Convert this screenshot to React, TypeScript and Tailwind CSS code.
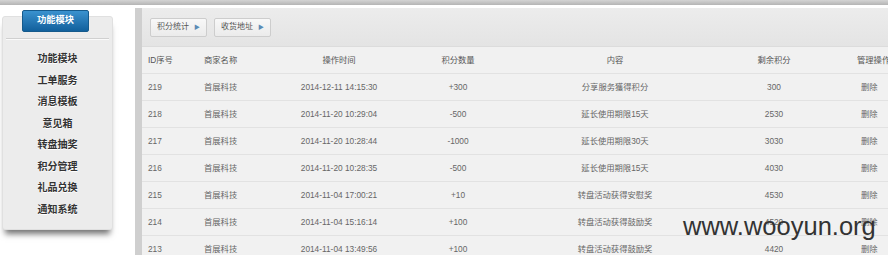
import React from "react";

const rows = [
  ["219", "首展科技", "2014-12-11 14:15:30", "+300", "分享服务獲得积分", "300"],
  ["218", "首展科技", "2014-11-20 10:29:04", "-500", "延长使用期限15天", "2530"],
  ["217", "首展科技", "2014-11-20 10:28:44", "-1000", "延长使用期限30天", "3030"],
  ["216", "首展科技", "2014-11-20 10:28:35", "-500", "延长使用期限15天", "4030"],
  ["215", "首展科技", "2014-11-04 17:00:21", "+10", "转盘活动获得安慰奖", "4530"],
  ["214", "首展科技", "2014-11-04 15:16:14", "+100", "转盘活动获得鼓励奖", "4520"],
  ["213", "首展科技", "2014-11-04 13:49:56", "+100", "转盘活动获得鼓励奖", "4420"],
];

const menu = ["功能模块", "工单服务", "消息模板", "意见箱", "转盘抽奖", "积分管理", "礼品兑换", "通知系统"];

const cols = "grid grid-cols-[56px_74px_134px_104px_210px_108px_80px]";

export default function App() {
  return (
    <div
      className="relative w-[888px] h-[255px] overflow-hidden bg-white"
      style={{ fontFamily: '"Liberation Sans", "Noto Sans CJK SC", sans-serif' }}
    >
      <div className="h-[5px] bg-gradient-to-b from-[#d4d4d4] to-[#b4b4b4]" />
      <div className="h-[3px] bg-white" />
      <div className="flex">
        {/* sidebar */}
        <div className="w-[135px] shrink-0 pt-[8px]">
          <div className="ml-[2px] w-[111px] rounded-[3px] border border-[#e0e0e0] bg-[#ececec] pb-[9px] shadow-[0_7px_6px_-3px_rgba(0,0,0,0.55)]">
            <div className="-mt-[7px] ml-[19px] flex h-[22px] w-[67px] items-center justify-center rounded-[2px] border border-[#155a8c] bg-gradient-to-b from-[#3a92cf] to-[#11609c] text-[9.3px] font-bold text-white">
              功能模块
            </div>
            <div className="mx-[3px] mt-[6px] h-px bg-[#d0d0d0] shadow-[0_1px_0_#fafafa]" />
            <div className="mt-[9px] flex flex-col">
              {menu.map((m) => (
                <div
                  key={m}
                  className="flex h-[21.5px] shrink-0 items-center justify-center text-[10px] font-bold text-[#333] [text-shadow:0_1px_0_#fff]"
                >
                  {m}
                </div>
              ))}
            </div>
          </div>
        </div>
        {/* main */}
        <div className="flex-1 border-l-[7px] border-[#cfcfcf] bg-[#f1f1f1] h-[247px]">
          <div className="flex h-[39px] items-center gap-[7px] border-b border-[#dcdcdc] bg-gradient-to-b from-[#ececec] to-[#e4e4e4] pl-[8px]">
            {["积分统计", "收货地址"].map((b) => (
              <div
                key={b}
                className="flex h-[19px] items-center gap-[5px] rounded-[2px] border border-[#cdcdcd] bg-gradient-to-b from-[#f8f8f8] to-[#ebebeb] px-[6px] text-[8px] text-[#555]"
              >
                <span>{b}</span>
                <span className="text-[6px] text-[#5b8bb5]">▶</span>
              </div>
            ))}
          </div>
          <div className={`${cols} h-[27px] items-center border-b border-[#e2e2e2] text-[8.3px] text-[#555]`}>
            <div className="pl-[6px]">ID序号</div>
            <div className="pl-[6px]">商家名称</div>
            <div className="text-center">操作时间</div>
            <div className="text-center">积分数量</div>
            <div className="text-center">内容</div>
            <div className="text-center">剩余积分</div>
            <div className="whitespace-nowrap pl-[29px]">管理操作</div>
          </div>
          {rows.map((r) => (
            <div
              key={r[0]}
              className={`${cols} h-[27px] items-center border-b border-[#e2e2e2] text-[8.3px] text-[#666]`}
            >
              <div className="pl-[6px]">{r[0]}</div>
              <div className="pl-[6px]">{r[1]}</div>
              <div className="text-center">{r[2]}</div>
              <div className="text-center">{r[3]}</div>
              <div className="text-center">{r[4]}</div>
              <div className="text-center">{r[5]}</div>
              <div className="pl-[33px]">删除</div>
            </div>
          ))}
        </div>
      </div>
      <div className="absolute left-[683px] top-[214px] text-[25.5px] leading-none text-[#333]">
        www.wooyun.org
      </div>
    </div>
  );
}
